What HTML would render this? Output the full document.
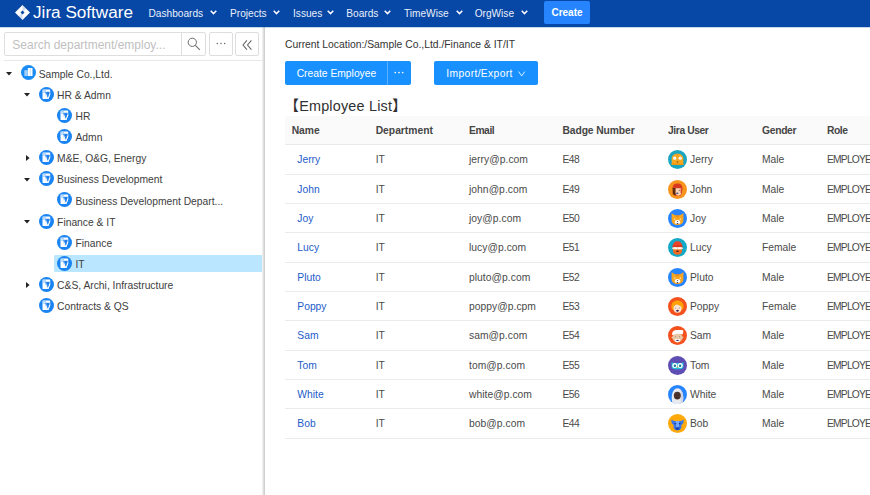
<!DOCTYPE html>
<html><head><meta charset="utf-8"><title>OrgWise</title>
<style>
*{box-sizing:border-box;margin:0;padding:0}
html,body{width:870px;height:495px;overflow:hidden;background:#fff;font-family:"Liberation Sans","Noto Sans CJK SC",sans-serif;color:#333;font-size:10.67px}
#nav{position:absolute;left:0;top:0;width:870px;height:27px;background:#0747a6;color:#fff;box-shadow:0 1px 0 rgba(7,71,166,0.22);z-index:2}
#nav .logo{position:absolute;left:32.6px;top:2.0px;font-size:15.8px;line-height:22px;white-space:nowrap;transform:scaleX(1.085);transform-origin:0 0}
#nav .mi{position:absolute;top:6.9px;font-size:10.15px;line-height:14px;white-space:nowrap;color:#e9f0fb}
#nav .cv{position:absolute;top:9.7px}
#create{position:absolute;left:544px;top:1px;width:46px;height:23px;background:#2684ff;border-radius:2px;font-size:10px;font-weight:bold;text-align:center;line-height:24.8px;color:#fff}
#side{position:absolute;left:0;top:27px;width:265px;height:468px;background:#fff}
#side:after{content:"";position:absolute;left:262.2px;top:0;width:2.6px;height:468px;background:linear-gradient(to right,#f6f6f6,#c9c9c9)}
#main{position:absolute;left:265px;top:27px;width:605px;height:468px;overflow:hidden}
.sb{position:absolute;top:5.3px;height:23.8px;border:1px solid #dedede;background:#fff}
.ph{position:absolute;left:12.3px;top:10.8px;font-size:12px;line-height:14px;color:#bfbfbf;white-space:nowrap}
.sep{position:absolute;left:4px;top:32.5px;width:258px;height:1px;background:#e8e8e8}
.hl{position:absolute;left:53.7px;width:209.5px;height:16.6px;background:#bae7ff;border-radius:1.5px}
.cr{position:absolute}
.ic{position:absolute}
.tn{position:absolute;white-space:nowrap;font-size:10.3px;line-height:14px;color:#404040}
.loc{position:absolute;left:20px;top:10.5px;font-size:10.35px;line-height:14px;color:#333;white-space:nowrap}
.btn{position:absolute;top:33.8px;height:24.1px;background:#1890ff;color:#fff;font-size:10.3px;line-height:26.4px;text-align:center;white-space:nowrap}
.ttl{position:absolute;left:19.6px;top:69.4px;font-size:14.4px;line-height:20px;color:#303030;white-space:nowrap;letter-spacing:0.2px}
.th{position:absolute;left:20px;top:89px;width:585px;height:29px;background:#fafafa;border-bottom:1px solid #e8e8e8}
.th span{position:absolute;top:7.8px;font-weight:bold;font-size:10.3px;line-height:14px;color:#454545;white-space:nowrap}
.row{position:absolute;left:20px;width:585px;border-bottom:1px solid #ebebeb}
.row span{position:absolute;top:8.4px;white-space:nowrap;font-size:10.3px;line-height:14px;color:#4a4a4a}
.row span.n{color:#1d5cc9}
.av{position:absolute;left:382.8px;top:5px}
</style></head><body>
<svg width="0" height="0" style="position:absolute">
<defs>
<g id="ico"><circle cx="7.5" cy="7.5" r="7.5" fill="#1a8cf5"/><rect x="3.4" y="5.3" width="3.2" height="5.6" fill="#bcdcff"/><path d="M3.4 6.9h3.2M3.4 8.3h3.2M3.4 9.7h3.2" stroke="#6db3fa" stroke-width="0.5"/><rect x="6.8" y="3.1" width="4.7" height="7.8" rx="0.5" fill="#fff"/><path d="M9.3 3.6V10.9" stroke="#9ccbfc" stroke-width="0.6"/></g>
<g id="idp"><circle cx="7.5" cy="7.5" r="7.5" fill="#1a84f2"/><path d="M3.5 3a0.4 0.4 0 0 1 .4-.4H10.8a0.4 0.4 0 0 1 .4.4V7.2L9.5 12H3.9a0.4 0.4 0 0 1-.4-.4Z" fill="#fff"/><path d="M3.7 3.6h3.3" stroke="#8fc3fa" stroke-width="0.8"/><path d="M3.7 5.1h3.3" stroke="#6fb1f8" stroke-width="0.8"/><path d="M6.3 4.8H10.7V6.8L9 11.3H8.3L6.3 7.4Z" fill="#3f95f4"/><path d="M6.5 6.6L8.5 11.4" stroke="#fff" stroke-width="1.1"/><path d="M10.9 6.6L9.1 11.6" stroke="#fff" stroke-width="0.9"/><circle cx="9" cy="6.2" r="1.1" fill="#1a7be8"/><path d="M9 7L8.75 9.8" stroke="#1a7be8" stroke-width="0.7"/></g>
<g id="a1"><circle cx="9.5" cy="9.5" r="9.5" fill="#1aa6c3"/><path d="M3.7 15V8.6C3.7 5.6 6.2 3.8 9.5 3.8S15.3 5.6 15.3 8.6V15Z" fill="#f7a823"/><path d="M3.7 13.2H15.3V15H3.7Z" fill="#ee9a14"/><circle cx="6.7" cy="8.2" r="1.6" fill="#fff"/><circle cx="12.2" cy="8.2" r="1.6" fill="#fff"/><circle cx="6.7" cy="8.2" r="0.7" fill="#cfe4f5"/><circle cx="12.2" cy="8.2" r="0.7" fill="#cfe4f5"/><path d="M8.4 11.5H10.6L9.5 13Z" fill="#6b4a1c"/><path d="M9.5 3.8V6" stroke="#e58f10" stroke-width="0.6"/></g>
<g id="a2"><circle cx="9.5" cy="9.5" r="9.5" fill="#f7941d"/><path d="M4.6 8.2C4.6 5 6.8 3.6 9.6 3.6S14.4 5 14.4 8.4L13 15.4H6Z" fill="#d8391f"/><path d="M4.6 8H7.6V15.6L4.8 14.2Z" fill="#5b2c0e"/><path d="M7.6 8.2H13.4V12.6C13.4 14.4 12 15.6 10.4 15.6S7.6 14.4 7.6 12.6Z" fill="#f6d3b5"/><path d="M12.6 8.4L14.4 8.4 13.6 14 12.6 13Z" fill="#d8391f"/><ellipse cx="9.3" cy="13.2" rx="1.2" ry="0.7" fill="#3b4a8a"/><circle cx="11.3" cy="10.3" r="0.5" fill="#4a2a10"/></g>
<g id="a3"><circle cx="9.5" cy="9.5" r="9.5" fill="#2684ff"/><path d="M3.6 4.2L7 6.2H12L15.4 4.2V11.2C15.4 14 12.8 16 9.5 16S3.6 14 3.6 11.2Z" fill="#f8a51f"/><path d="M8.2 6.2L8.6 8M9.5 6.2V8.2M10.8 6.2L10.4 8" stroke="#e5701a" stroke-width="0.6"/><ellipse cx="9.5" cy="13" rx="2.8" ry="2" fill="#fff"/><path d="M8.7 11.9H10.3L9.5 13Z" fill="#3a2a2a"/><ellipse cx="9.5" cy="14.6" rx="0.9" ry="0.6" fill="#3a3050"/><circle cx="6.7" cy="10.2" r="0.6" fill="#fff"/><circle cx="12.3" cy="10.2" r="0.6" fill="#fff"/></g>
<g id="a4"><circle cx="9.5" cy="9.5" r="9.5" fill="#14a8c9"/><path d="M4.8 8.6C4.8 5.2 6.8 3.2 9.5 3.2S14.2 5.2 14.2 8.6Z" fill="#ea442b"/><rect x="4.4" y="7.6" width="10.2" height="1.4" rx="0.5" fill="#d6351f"/><rect x="5" y="9" width="9" height="3" fill="#f5d0b0"/><rect x="5.6" y="9.4" width="3.4" height="1.8" rx="0.6" fill="#fff"/><rect x="10" y="9.4" width="3.4" height="1.8" rx="0.6" fill="#fff"/><path d="M5 11.4H14V13C14 15 12 16.8 9.5 16.8S5 15 5 13Z" fill="#f26b21"/><ellipse cx="9.5" cy="13.2" rx="1.3" ry="0.8" fill="#3a2420"/><circle cx="4.6" cy="10.3" r="0.8" fill="#f5d0b0"/><circle cx="14.4" cy="10.3" r="0.8" fill="#f5d0b0"/></g>
<g id="a5"><circle cx="9.5" cy="9.5" r="9.5" fill="#f4511e"/><path d="M3.4 9.6C3.4 5.6 6 3.4 9.5 3.4S15.6 5.6 15.6 9.6C15.6 11.6 14.8 12.6 13.8 13H5.2C4.2 12.6 3.4 11.6 3.4 9.6Z" fill="#ffa20a"/><ellipse cx="9.5" cy="11.6" rx="4" ry="4.2" fill="#fbe3d3"/><path d="M5.4 9.4C6.6 8.8 8 7.6 8.6 6.6 9.6 8 11.8 9 13.6 9.4L13.4 7 9.5 5 5.8 6.8Z" fill="#ffa20a"/><circle cx="7.7" cy="11" r="0.6" fill="#7a8aa8"/><circle cx="11.3" cy="11" r="0.6" fill="#7a8aa8"/><path d="M8.2 13H10.8C10.8 14.2 10.2 14.8 9.5 14.8S8.2 14.2 8.2 13Z" fill="#2b2350"/><circle cx="9.5" cy="12.3" r="0.5" fill="#e8a58a"/></g>
<g id="a6"><circle cx="9.5" cy="9.5" r="9.5" fill="#f4511e"/><ellipse cx="9.5" cy="11.6" rx="5" ry="4.8" fill="#e9c7a5"/><circle cx="4.6" cy="11.4" r="1" fill="#e9c7a5"/><circle cx="14.4" cy="11.4" r="1" fill="#e9c7a5"/><path d="M4 8.2C4 5.6 6 4 9 4H14.2C15.2 4 15.6 5 15.2 6L14.6 8.4C12.6 7.4 8.6 7.2 4.6 9.2Z" fill="#fff"/><path d="M7 13.4C7.8 12.8 11.2 12.8 12 13.4L11.6 15.6C10.4 16.4 8.6 16.4 7.4 15.6Z" fill="#fff"/><ellipse cx="9.5" cy="14.4" rx="1.3" ry="0.7" fill="#2b3560"/><circle cx="7.6" cy="10.8" r="0.5" fill="#8a7a6a"/><circle cx="11.4" cy="10.8" r="0.5" fill="#8a7a6a"/></g>
<g id="a7"><circle cx="9.5" cy="9.5" r="9.5" fill="#5e4db2"/><path d="M3.6 6L5.4 7H13.6L15.4 6V10.4C15.4 12.2 14 13.2 12.4 13.2H6.6C5 13.2 3.6 12.2 3.6 10.4Z" fill="#21c1dc"/><circle cx="6.8" cy="9.6" r="2.5" fill="#fff"/><circle cx="12.2" cy="9.6" r="2.5" fill="#fff"/><circle cx="6.9" cy="9.7" r="1.2" fill="#1b8aa8"/><circle cx="12.1" cy="9.7" r="1.2" fill="#1b8aa8"/><circle cx="6.9" cy="9.7" r="0.5" fill="#163a50"/><circle cx="12.1" cy="9.7" r="0.5" fill="#163a50"/><path d="M8.8 10.4H10.2L9.5 12.2Z" fill="#f7a823"/></g>
<g id="a8"><circle cx="9.5" cy="9.5" r="9.5" fill="#2684ff"/><path d="M4.2 17.2C3.4 14 3.6 10 4.6 7.4 5.6 4.8 7.4 3.2 9.5 3.2S13.4 4.8 14.4 7.4C15.4 10 15.6 14 14.8 17.2 13.2 18.4 11.4 19 9.5 19S5.8 18.4 4.2 17.2Z" fill="#e9e9f0"/><path d="M12.6 5L14.4 7.4C15.4 10 15.6 14 14.8 17.2L12.8 18.2Z" fill="#cfd2e0"/><ellipse cx="9.3" cy="10.6" rx="3.5" ry="3.9" fill="#4e342e"/><ellipse cx="9.3" cy="12.8" rx="1.2" ry="0.6" fill="#2a1a18"/><circle cx="7.9" cy="10" r="0.45" fill="#1a1010"/><circle cx="10.7" cy="10" r="0.45" fill="#1a1010"/></g>
<g id="a9"><circle cx="9.5" cy="9.5" r="9.5" fill="#ffa90a"/><path d="M3.2 5.6L6 7H13L15.8 5.6 15.2 9.6 13.4 11V13.6C13.4 15.2 11.6 16.4 9.5 16.4S5.6 15.2 5.6 13.6V11L3.8 9.6Z" fill="#3a78e8"/><path d="M7.6 7H11.4L10.8 13H8.2Z" fill="#79a9f5"/><rect x="6.4" y="9" width="1.8" height="1.2" fill="#1c3f9a"/><rect x="10.8" y="9" width="1.8" height="1.2" fill="#1c3f9a"/><path d="M7.4 13.4H11.6V15C11.6 15.6 10.6 16 9.5 16S7.4 15.6 7.4 15Z" fill="#1f4db8"/><path d="M8.6 14.2H10.4" stroke="#12307a" stroke-width="0.7"/></g>
</defs></svg>
<div id="nav">
<svg style="position:absolute;left:14.6px;top:5px" width="15" height="15" viewBox="0 0 15 15"><path d="M7.5 0L15 7.5L7.5 15L0 7.5Z" fill="#fff"/><path d="M7.5 0L11.2 3.7L7.5 7.5Z" fill="#0747a6" opacity="0.18"/><path d="M7.5 15L3.8 11.3L7.5 7.5Z" fill="#0747a6" opacity="0.18"/><path d="M7.5 5.5L9.5 7.5L7.5 9.5L5.5 7.5Z" fill="#0747a6"/></svg>
<div class="logo">Jira Software</div>
<div class="mi" style="left:148.5px">Dashboards</div><svg class="cv" style="left:210px" width="7" height="5" viewBox="0 0 7 5"><path d="M0.7 0.8L3.5 3.6L6.3 0.8" fill="none" stroke="#fff" stroke-width="1.5"/></svg>
<div class="mi" style="left:230px">Projects</div><svg class="cv" style="left:272.5px" width="7" height="5" viewBox="0 0 7 5"><path d="M0.7 0.8L3.5 3.6L6.3 0.8" fill="none" stroke="#fff" stroke-width="1.5"/></svg>
<div class="mi" style="left:293px">Issues</div><svg class="cv" style="left:326.5px" width="7" height="5" viewBox="0 0 7 5"><path d="M0.7 0.8L3.5 3.6L6.3 0.8" fill="none" stroke="#fff" stroke-width="1.5"/></svg>
<div class="mi" style="left:346.3px">Boards</div><svg class="cv" style="left:384px" width="7" height="5" viewBox="0 0 7 5"><path d="M0.7 0.8L3.5 3.6L6.3 0.8" fill="none" stroke="#fff" stroke-width="1.5"/></svg>
<div class="mi" style="left:404px">TimeWise</div><svg class="cv" style="left:455.5px" width="7" height="5" viewBox="0 0 7 5"><path d="M0.7 0.8L3.5 3.6L6.3 0.8" fill="none" stroke="#fff" stroke-width="1.5"/></svg>
<div class="mi" style="left:474.7px">OrgWise</div><svg class="cv" style="left:521px" width="7" height="5" viewBox="0 0 7 5"><path d="M0.7 0.8L3.5 3.6L6.3 0.8" fill="none" stroke="#fff" stroke-width="1.5"/></svg>
<div id="create">Create</div>
</div>
<div id="side">
<div class="sb" style="left:3.7px;width:178px;border-radius:2px 0 0 2px"></div>
<div class="ph">Search department/employ...</div>
<div class="sb" style="left:180.7px;width:25px;border-radius:0 2px 2px 0"></div>
<svg style="position:absolute;left:187.2px;top:9.6px" width="14" height="14" viewBox="0 0 14 14"><circle cx="5.3" cy="5.3" r="4.15" fill="none" stroke="#6c6c6c" stroke-width="1"/><path d="M8.3 8.3L12.8 12.8" stroke="#6c6c6c" stroke-width="1.1"/></svg>
<div class="sb" style="left:209px;width:23.5px;border-radius:2px"></div>
<svg style="position:absolute;left:216px;top:15.2px" width="10" height="3" viewBox="0 0 10 3"><circle cx="1.3" cy="1.5" r="0.75" fill="#666"/><circle cx="5" cy="1.5" r="0.75" fill="#666"/><circle cx="8.7" cy="1.5" r="0.75" fill="#666"/></svg>
<div class="sb" style="left:235.3px;width:23.5px;border-radius:2px"></div>
<svg style="position:absolute;left:242.3px;top:12.8px" width="10" height="10" viewBox="0 0 10 10"><path d="M4.9 0.3L1 5L4.9 9.7M9.4 0.3L5.5 5L9.4 9.7" fill="none" stroke="#666" stroke-width="1.05"/></svg>
<div class="sep"></div>
<svg class="cr" style="left:5.80px;top:45.30px" width="6" height="4" viewBox="0 0 6 4"><path d="M0 0H6L3 3.6Z" fill="#222"/></svg>
<svg class="ic" style="left:20.60px;top:38.40px" width="15" height="15" viewBox="0 0 15 15"><use href="#ico"/></svg>
<div class="tn" style="left:38.70px;top:40.60px">Sample Co.,Ltd.</div>
<svg class="cr" style="left:24.40px;top:66.47px" width="6" height="4" viewBox="0 0 6 4"><path d="M0 0H6L3 3.6Z" fill="#222"/></svg>
<svg class="ic" style="left:39.00px;top:59.57px" width="15" height="15" viewBox="0 0 15 15"><use href="#idp"/></svg>
<div class="tn" style="left:57.10px;top:61.77px">HR &amp; Admn</div>
<svg class="ic" style="left:57.40px;top:80.74px" width="15" height="15" viewBox="0 0 15 15"><use href="#idp"/></svg>
<div class="tn" style="left:75.50px;top:82.94px">HR</div>
<svg class="ic" style="left:57.40px;top:101.91px" width="15" height="15" viewBox="0 0 15 15"><use href="#idp"/></svg>
<div class="tn" style="left:75.50px;top:104.11px">Admn</div>
<svg class="cr" style="left:25.60px;top:128.08px" width="4" height="6" viewBox="0 0 4 6"><path d="M0 0V6L3.6 3Z" fill="#222"/></svg>
<svg class="ic" style="left:39.00px;top:123.08px" width="15" height="15" viewBox="0 0 15 15"><use href="#idp"/></svg>
<div class="tn" style="left:57.10px;top:125.28px">M&amp;E, O&amp;G, Energy</div>
<svg class="cr" style="left:24.40px;top:151.15px" width="6" height="4" viewBox="0 0 6 4"><path d="M0 0H6L3 3.6Z" fill="#222"/></svg>
<svg class="ic" style="left:39.00px;top:144.25px" width="15" height="15" viewBox="0 0 15 15"><use href="#idp"/></svg>
<div class="tn" style="left:57.10px;top:146.45px">Business Development</div>
<svg class="ic" style="left:57.40px;top:165.42px" width="15" height="15" viewBox="0 0 15 15"><use href="#idp"/></svg>
<div class="tn" style="left:75.50px;top:167.62px">Business Development Depart...</div>
<svg class="cr" style="left:24.40px;top:193.49px" width="6" height="4" viewBox="0 0 6 4"><path d="M0 0H6L3 3.6Z" fill="#222"/></svg>
<svg class="ic" style="left:39.00px;top:186.59px" width="15" height="15" viewBox="0 0 15 15"><use href="#idp"/></svg>
<div class="tn" style="left:57.10px;top:188.79px">Finance &amp; IT</div>
<svg class="ic" style="left:57.40px;top:207.76px" width="15" height="15" viewBox="0 0 15 15"><use href="#idp"/></svg>
<div class="tn" style="left:75.50px;top:209.96px">Finance</div>
<div class="hl" style="top:228.23px"></div>
<svg class="ic" style="left:57.40px;top:228.93px" width="15" height="15" viewBox="0 0 15 15"><use href="#idp"/></svg>
<div class="tn" style="left:75.50px;top:231.13px">IT</div>
<svg class="cr" style="left:25.60px;top:255.10px" width="4" height="6" viewBox="0 0 4 6"><path d="M0 0V6L3.6 3Z" fill="#222"/></svg>
<svg class="ic" style="left:39.00px;top:250.10px" width="15" height="15" viewBox="0 0 15 15"><use href="#idp"/></svg>
<div class="tn" style="left:57.10px;top:252.30px">C&amp;S, Archi, Infrastructure</div>
<svg class="ic" style="left:39.00px;top:271.27px" width="15" height="15" viewBox="0 0 15 15"><use href="#idp"/></svg>
<div class="tn" style="left:57.10px;top:273.47px">Contracts &amp; QS</div>
</div>
<div id="main">
<div class="loc">Current Location:/Sample Co.,Ltd./Finance &amp; IT/IT</div>
<div class="btn" style="left:20px;width:101.5px;border-radius:2px 0 0 2px;padding-left:1.4px">Create Employee</div>
<div class="btn" style="left:121.5px;width:24.5px;border-radius:0 2px 2px 0;border-left:1px solid #5cb0ff"><svg style="position:absolute;left:6.9px;top:9.9px" width="10" height="3" viewBox="0 0 10 3"><circle cx="1.3" cy="1.5" r="0.85" fill="#fff"/><circle cx="5" cy="1.5" r="0.85" fill="#fff"/><circle cx="8.7" cy="1.5" r="0.85" fill="#fff"/></svg></div>
<div class="btn" style="left:169px;width:103.7px;border-radius:2px;text-align:left;padding-left:12.3px;letter-spacing:0.36px">Import/Export<svg style="position:absolute;left:84.2px;top:9.8px" width="7.4" height="6" viewBox="0 0 7.4 6"><path d="M0.6 0.6L3.7 4.9L6.8 0.6" fill="none" stroke="#fff" stroke-width="0.85"/></svg></div>
<div class="ttl">【Employee List】</div>
<div class="th"><span style="left:6.7px">Name</span><span style="left:90.7px">Department</span><span style="left:184px;letter-spacing:-0.45px">Email</span><span style="left:277.5px;letter-spacing:-0.1px">Badge Number</span><span style="left:383px;letter-spacing:-0.4px">Jira User</span><span style="left:477px;letter-spacing:-0.3px">Gender</span><span style="left:542px;letter-spacing:-0.45px">Role</span></div>
<div class="row" style="top:118px;height:30px"><span class="n" style="left:12.3px">Jerry</span><span style="left:90.7px">IT</span><span style="left:184px;letter-spacing:0.04px">jerry@p.com</span><span style="left:277.6px;letter-spacing:-0.6px">E48</span><svg class="av" width="19" height="19" viewBox="0 0 19 19"><use href="#a1"/></svg><span style="left:405px">Jerry</span><span style="left:477px">Male</span><span style="left:542px;letter-spacing:-0.8px">EMPLOYEE</span></div>
<div class="row" style="top:148px;height:29px"><span class="n" style="left:12.3px">John</span><span style="left:90.7px">IT</span><span style="left:184px;letter-spacing:0.04px">john@p.com</span><span style="left:277.6px;letter-spacing:-0.6px">E49</span><svg class="av" width="19" height="19" viewBox="0 0 19 19"><use href="#a2"/></svg><span style="left:405px">John</span><span style="left:477px">Male</span><span style="left:542px;letter-spacing:-0.8px">EMPLOYEE</span></div>
<div class="row" style="top:177px;height:29px"><span class="n" style="left:12.3px">Joy</span><span style="left:90.7px">IT</span><span style="left:184px;letter-spacing:0.04px">joy@p.com</span><span style="left:277.6px;letter-spacing:-0.6px">E50</span><svg class="av" width="19" height="19" viewBox="0 0 19 19"><use href="#a3"/></svg><span style="left:405px">Joy</span><span style="left:477px">Male</span><span style="left:542px;letter-spacing:-0.8px">EMPLOYEE</span></div>
<div class="row" style="top:206px;height:30px"><span class="n" style="left:12.3px">Lucy</span><span style="left:90.7px">IT</span><span style="left:184px;letter-spacing:0.04px">lucy@p.com</span><span style="left:277.6px;letter-spacing:-0.6px">E51</span><svg class="av" width="19" height="19" viewBox="0 0 19 19"><use href="#a4"/></svg><span style="left:405px">Lucy</span><span style="left:477px">Female</span><span style="left:542px;letter-spacing:-0.8px">EMPLOYEE</span></div>
<div class="row" style="top:236px;height:29px"><span class="n" style="left:12.3px">Pluto</span><span style="left:90.7px">IT</span><span style="left:184px;letter-spacing:0.04px">pluto@p.com</span><span style="left:277.6px;letter-spacing:-0.6px">E52</span><svg class="av" width="19" height="19" viewBox="0 0 19 19"><use href="#a3"/></svg><span style="left:405px">Pluto</span><span style="left:477px">Male</span><span style="left:542px;letter-spacing:-0.8px">EMPLOYEE</span></div>
<div class="row" style="top:265px;height:29px"><span class="n" style="left:12.3px">Poppy</span><span style="left:90.7px">IT</span><span style="left:184px;letter-spacing:0.04px">poppy@p.cpm</span><span style="left:277.6px;letter-spacing:-0.6px">E53</span><svg class="av" width="19" height="19" viewBox="0 0 19 19"><use href="#a5"/></svg><span style="left:405px">Poppy</span><span style="left:477px">Female</span><span style="left:542px;letter-spacing:-0.8px">EMPLOYEE</span></div>
<div class="row" style="top:294px;height:30px"><span class="n" style="left:12.3px">Sam</span><span style="left:90.7px">IT</span><span style="left:184px;letter-spacing:0.04px">sam@p.com</span><span style="left:277.6px;letter-spacing:-0.6px">E54</span><svg class="av" width="19" height="19" viewBox="0 0 19 19"><use href="#a6"/></svg><span style="left:405px">Sam</span><span style="left:477px">Male</span><span style="left:542px;letter-spacing:-0.8px">EMPLOYEE</span></div>
<div class="row" style="top:324px;height:29px"><span class="n" style="left:12.3px">Tom</span><span style="left:90.7px">IT</span><span style="left:184px;letter-spacing:0.04px">tom@p.com</span><span style="left:277.6px;letter-spacing:-0.6px">E55</span><svg class="av" width="19" height="19" viewBox="0 0 19 19"><use href="#a7"/></svg><span style="left:405px">Tom</span><span style="left:477px">Male</span><span style="left:542px;letter-spacing:-0.8px">EMPLOYEE</span></div>
<div class="row" style="top:353px;height:29px"><span class="n" style="left:12.3px">White</span><span style="left:90.7px">IT</span><span style="left:184px;letter-spacing:0.04px">white@p.com</span><span style="left:277.6px;letter-spacing:-0.6px">E56</span><svg class="av" width="19" height="19" viewBox="0 0 19 19"><use href="#a8"/></svg><span style="left:405px">White</span><span style="left:477px">Male</span><span style="left:542px;letter-spacing:-0.8px">EMPLOYEE</span></div>
<div class="row" style="top:382px;height:30px"><span class="n" style="left:12.3px">Bob</span><span style="left:90.7px">IT</span><span style="left:184px;letter-spacing:0.04px">bob@p.com</span><span style="left:277.6px;letter-spacing:-0.6px">E44</span><svg class="av" width="19" height="19" viewBox="0 0 19 19"><use href="#a9"/></svg><span style="left:405px">Bob</span><span style="left:477px">Male</span><span style="left:542px;letter-spacing:-0.8px">EMPLOYEE</span></div>
</div>
</body></html>
